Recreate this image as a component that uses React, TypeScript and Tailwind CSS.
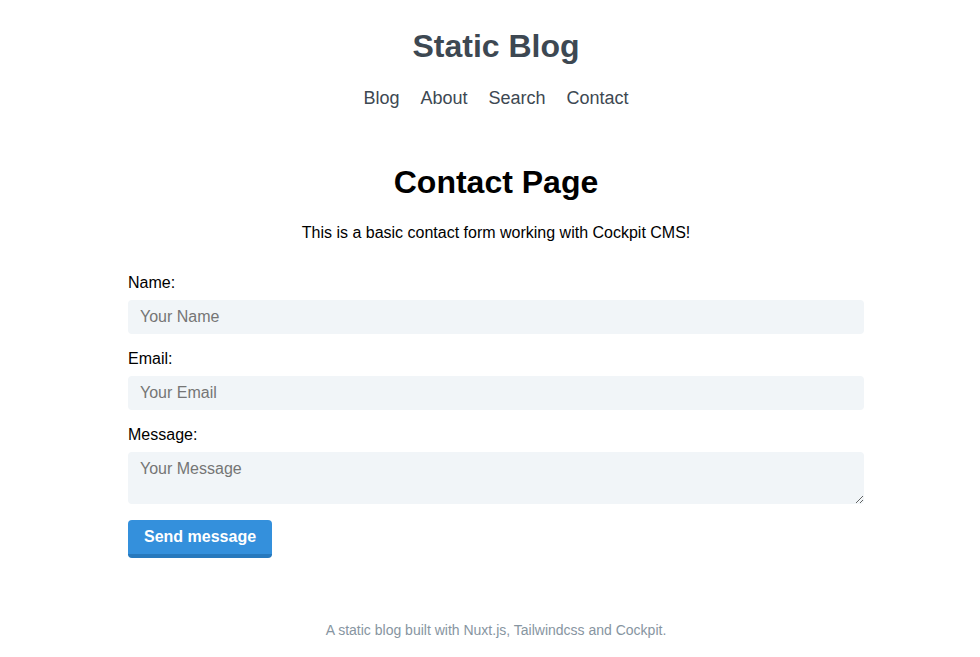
import React from 'react';

const navLinks = ['Blog', 'About', 'Search', 'Contact'];

export default function App() {
  return (
    <div className="min-h-screen bg-white font-['Liberation_Sans',Arial,sans-serif] flex flex-col items-center pl-[12px]">
      {/* Header */}
      <header className="pt-[26px] flex flex-col items-center">
        <h1 className="text-[32px] leading-10 font-bold text-[#3d4852]">Static Blog</h1>
        <nav className="mt-[18px] flex gap-[21px] text-lg leading-7 text-[#3d4852]">
          {navLinks.map((link) => (
            <a key={link} href="#" className="hover:underline">
              {link}
            </a>
          ))}
        </nav>
      </header>

      {/* Content */}
      <main className="w-[736px] mt-[50px]">
        <h2 className="text-[32px] leading-10 font-bold text-black text-center">Contact Page</h2>
        <p className="mt-[19px] text-base leading-6 text-black text-center">
          This is a basic contact form working with Cockpit CMS!
        </p>

        <form className="mt-[26px] flex flex-col" onSubmit={(e) => e.preventDefault()}>
          <label htmlFor="name" className="block text-base leading-6 text-black mb-[5px]">Name:</label>
          <input
            id="name"
            type="text"
            placeholder="Your Name"
            className="w-full h-[34px] px-3 py-2 leading-[18px] text-base rounded bg-[#f1f5f8] text-[#3d4852] placeholder:text-[#757575] outline-none"
          />

          <label htmlFor="email" className="block mt-[13px] text-base leading-6 text-black mb-[5px]">Email:</label>
          <input
            id="email"
            type="email"
            placeholder="Your Email"
            className="w-full h-[34px] px-3 py-2 leading-[18px] text-base rounded bg-[#f1f5f8] text-[#3d4852] placeholder:text-[#757575] outline-none"
          />

          <label htmlFor="message" className="block mt-[13px] text-base leading-6 text-black mb-[5px]">Message:</label>
          <textarea
            id="message"
            rows={2}
            placeholder="Your Message"
            className="w-full h-[52px] px-3 py-2 leading-[18px] text-base rounded bg-[#f1f5f8] text-[#3d4852] placeholder:text-[#757575] outline-none"
          />

          <div className="mt-4">
            <button
              type="submit"
              className="h-[38px] px-4 py-[7px] leading-[20px] text-base font-bold text-white bg-[#3490dc] border-b-4 border-[#2779bd] rounded"
            >
              Send message
            </button>
          </div>
        </form>
      </main>

      {/* Footer */}
      <footer className="mt-[62px] pb-6">
        <p className="text-sm leading-5 text-[#8795a1]">A static blog built with Nuxt.js, Tailwindcss and Cockpit.</p>
      </footer>
    </div>
  );
}
